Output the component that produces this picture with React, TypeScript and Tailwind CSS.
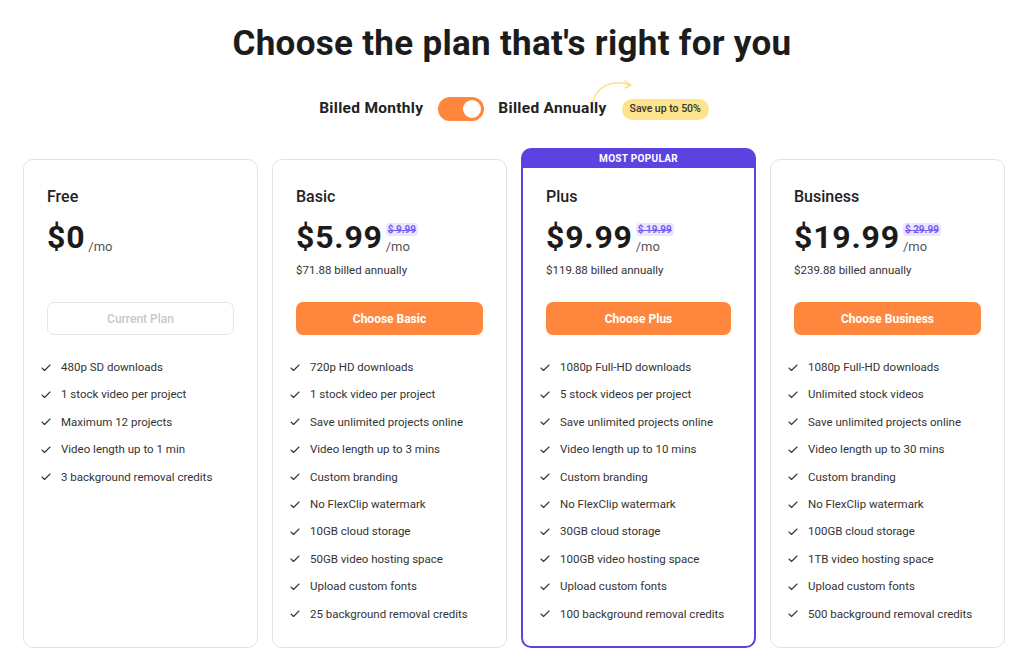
import { Check } from "lucide-react";

type Plan = {
  name: string;
  price: string;
  old?: string;
  billed?: string;
  cta: string;
  current?: boolean;
  popular?: boolean;
  features: string[];
};

const plans: Plan[] = [
  {
    name: "Free",
    price: "0",
    cta: "Current Plan",
    current: true,
    features: [
      "480p SD downloads",
      "1 stock video per project",
      "Maximum 12 projects",
      "Video length up to 1 min",
      "3 background removal credits",
    ],
  },
  {
    name: "Basic",
    price: "5.99",
    old: "9.99",
    billed: "$71.88 billed annually",
    cta: "Choose Basic",
    features: [
      "720p HD downloads",
      "1 stock video per project",
      "Save unlimited projects online",
      "Video length up to 3 mins",
      "Custom branding",
      "No FlexClip watermark",
      "10GB cloud storage",
      "50GB video hosting space",
      "Upload custom fonts",
      "25 background removal credits",
    ],
  },
  {
    name: "Plus",
    price: "9.99",
    old: "19.99",
    billed: "$119.88 billed annually",
    cta: "Choose Plus",
    popular: true,
    features: [
      "1080p Full-HD downloads",
      "5 stock videos per project",
      "Save unlimited projects online",
      "Video length up to 10 mins",
      "Custom branding",
      "No FlexClip watermark",
      "30GB cloud storage",
      "100GB video hosting space",
      "Upload custom fonts",
      "100 background removal credits",
    ],
  },
  {
    name: "Business",
    price: "19.99",
    old: "29.99",
    billed: "$239.88 billed annually",
    cta: "Choose Business",
    features: [
      "1080p Full-HD downloads",
      "Unlimited stock videos",
      "Save unlimited projects online",
      "Video length up to 30 mins",
      "Custom branding",
      "No FlexClip watermark",
      "100GB cloud storage",
      "1TB video hosting space",
      "Upload custom fonts",
      "500 background removal credits",
    ],
  },
];

function PlanCard({ plan }: { plan: Plan }) {
  return (
    <div
      className={
        plan.popular
          ? "relative h-[489px] rounded-[10px] border-2 border-[#5b43e1] bg-white px-[23px] pt-[24px]"
          : "relative h-[489px] rounded-[10px] border border-[#e3e3e3] bg-white px-[23px] pt-[25px]"
      }
    >
      {plan.popular && (
        <div className="absolute -left-[2px] -right-[2px] -top-[13px] flex h-[20px] items-center justify-center rounded-t-[10px] bg-[#5b43e1] text-[10px] font-bold tracking-[0.3px] text-white">
          MOST POPULAR
        </div>
      )}

      {/* header */}
      <h3 className="text-[16px] font-medium leading-[24px] text-[#222]">{plan.name}</h3>

      <div className="mt-[8px] flex h-[40px] items-end">
        <span className="text-[32px] font-bold leading-[40px] tracking-[0.8px] text-[#1b1b1b]">
          ${plan.price}
        </span>
        <div className="mb-[2px] ml-[3px] flex h-[34px] flex-col items-start justify-end">
          {plan.old && (
            <span className="mb-[3px] rounded-[4px] bg-[#ebe6ff] px-[2px] text-[10px] font-bold leading-[13px] text-[#7b5cf2] line-through">
              $ {plan.old}
            </span>
          )}
          <span className="text-[13px] leading-[16px] text-[#555]">/mo</span>
        </div>
      </div>

      <div className="mt-[5px] h-[16px] text-[11.5px] leading-[16px] text-[#333]">{plan.billed}</div>

      <button
        className={
          plan.current
            ? "mt-[24px] h-[33px] w-full rounded-[7px] border border-[#e6e6e6] bg-white text-[12px] font-medium text-[#c8c8c8]"
            : "mt-[24px] h-[33px] w-full rounded-[7px] bg-[#ff873d] text-[12px] font-bold text-white"
        }
      >
        {plan.cta}
      </button>

      <ul className="-ml-[7px] mt-[19px] flex flex-col">
        {plan.features.map((f) => (
          <li key={f} className="flex h-[27.4px] items-center gap-[9px] text-[11.5px] text-[#333]">
            <Check size={12} strokeWidth={2.2} className="text-[#333]" />
            <span>{f}</span>
          </li>
        ))}
      </ul>
    </div>
  );
}

export default function App() {
  return (
    <div className="min-h-screen bg-white font-['Roboto',sans-serif] text-[#1b1b1b]">
      <h1 className="pt-[22px] text-center text-[35px] font-bold leading-[44px] tracking-[0.3px] text-[#1c1c1c]">
        Choose the plan that's right for you
      </h1>

      {/* billing toggle */}
      <div className="mt-[31px] flex items-center justify-center pl-[4px]">
        <span className="text-[15.5px] font-bold tracking-[0.3px] text-[#222]">Billed Monthly</span>
        <div className="ml-[15px] flex h-[24px] w-[46px] items-center justify-end rounded-full bg-[#ff873d] px-[3px]">
          <div className="h-[18px] w-[18px] rounded-full bg-white" />
        </div>
        <span className="ml-[14px] text-[15.5px] font-bold tracking-[0.3px] text-[#222]">Billed Annually</span>
        <div className="relative ml-[15px]">
          <svg
            className="absolute -left-[32px] -top-[22px]"
            width="48"
            height="26"
            viewBox="0 0 48 26"
            fill="none"
          >
            <path d="M3 24 C 8 8, 24 2, 40 8" stroke="#fde08a" strokeWidth="1.5" strokeLinecap="round" />
            <path d="M35 4 L41 8 L35 11" stroke="#fde08a" strokeWidth="1.5" strokeLinecap="round" strokeLinejoin="round" />
          </svg>
          <span className="flex h-[21px] items-center rounded-full bg-[#fde38a] px-[8px] text-[10.5px] font-medium text-[#333]">
            Save up to 50%
          </span>
        </div>
      </div>

      {/* plans */}
      <div className="mt-[38px] grid grid-cols-4 gap-[14px] px-[23px] pr-[19px]">
        {plans.map((p) => (
          <PlanCard key={p.name} plan={p} />
        ))}
      </div>
    </div>
  );
}
